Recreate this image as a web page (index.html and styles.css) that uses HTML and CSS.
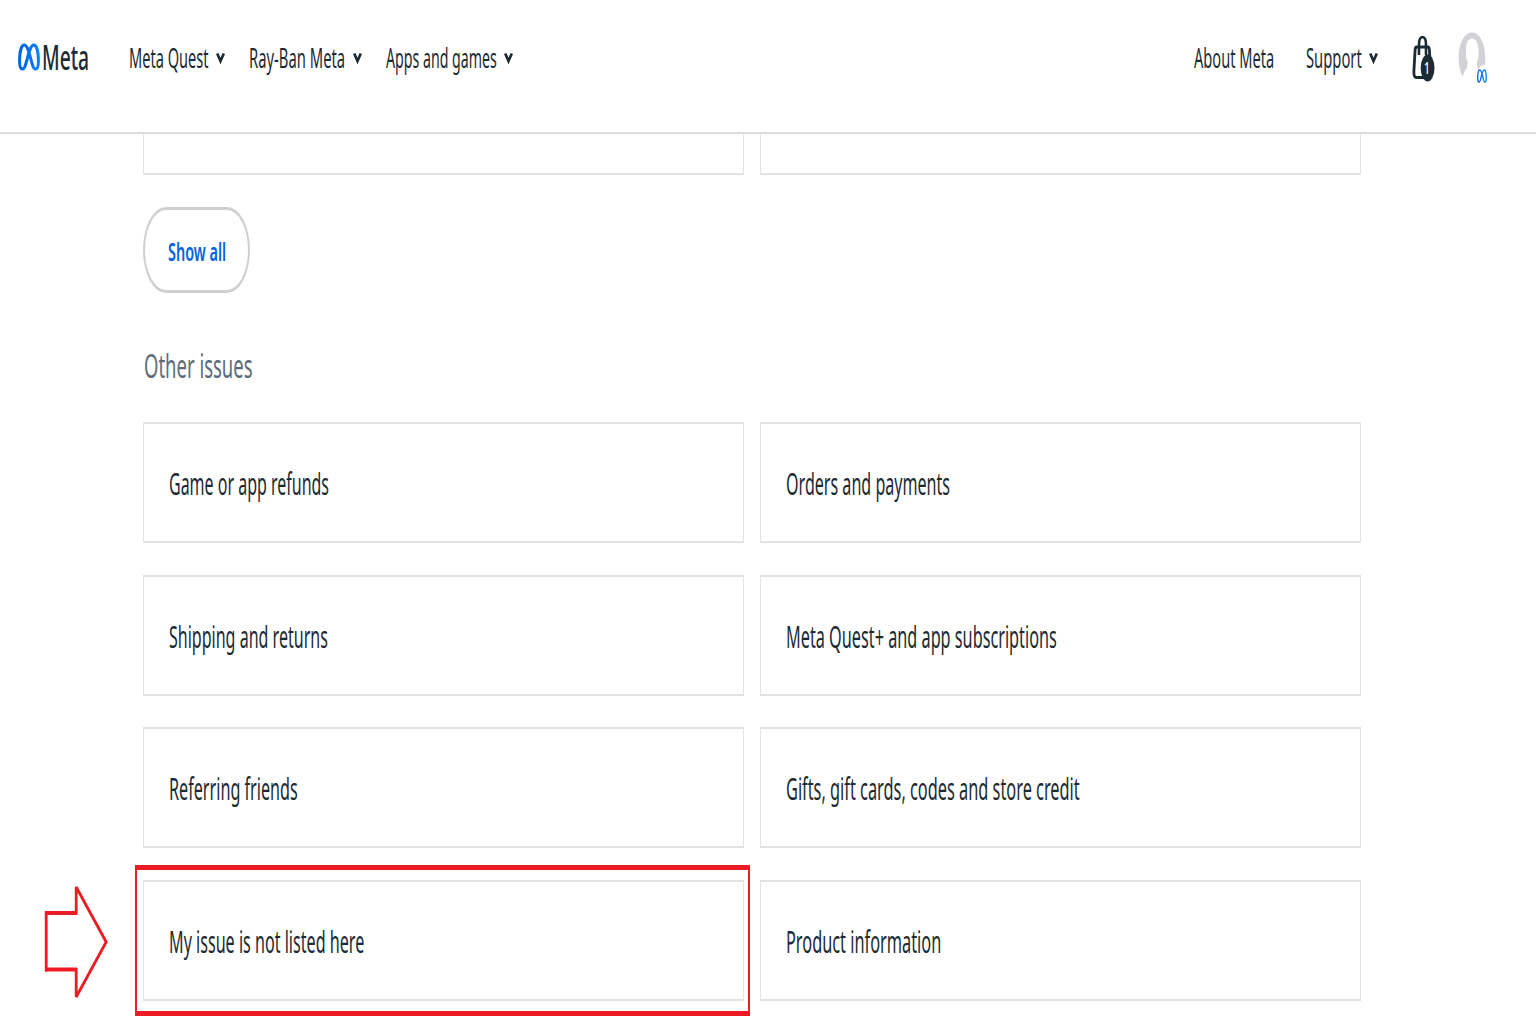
FILE: index.html
```html
<!DOCTYPE html>
<html lang="en">
<head>
<meta charset="utf-8">
<title>Meta support</title>
<link rel="stylesheet" href="styles.css">
</head>
<body>
<svg class="defs" aria-hidden="true">
  <linearGradient id="blue" x1="0" x2="1" y1="0" y2="0">
    <stop offset="0" stop-color="#0064e0"/>
    <stop offset="1" stop-color="#0a80fa"/>
  </linearGradient>
  <symbol id="meta-mark" viewBox="0 0 22 28" preserveAspectRatio="none">
    <path d="M1.600 18.500C1.600 9 3.200 1.900 6.200 1.900C9 1.900 10.700 8 12.300 14C14.200 21.500 15.300 26.100 17.500 26.100C19.800 26.100 20.400 23 20.400 18.500C20.400 9 18.800 1.900 15.800 1.900C13 1.900 11.300 8 9.700 14C7.800 21.500 6.700 26.100 4.500 26.100C2.200 26.100 1.600 23 1.600 18.500Z" fill="none" stroke="url(#blue)" stroke-width="3"/>
  </symbol>
  <symbol id="chevron" viewBox="0 0 9 12" preserveAspectRatio="none">
    <path d="M1.200 1.500 4.500 9 7.800 1.500" fill="none" stroke="#1c2b33" stroke-width="2.700"/>
  </symbol>
</svg>

<header class="header">
  <a class="logo">
    <svg class="logo-mark"><use href="#meta-mark"/></svg>
    <span class="logo-text"><span class="label s-logo">Meta</span></span>
  </a>
  <nav class="nav">
    <a class="nav-item w-quest"><span class="label s-quest">Meta Quest</span><svg class="chevron"><use href="#chevron"/></svg></a>
    <a class="nav-item w-rayban"><span class="label s-rayban">Ray-Ban Meta</span><svg class="chevron"><use href="#chevron"/></svg></a>
    <a class="nav-item w-apps"><span class="label s-apps">Apps and games</span><svg class="chevron"><use href="#chevron"/></svg></a>
  </nav>
  <div class="tools">
    <a class="nav-item w-about"><span class="label s-about">About Meta</span></a>
    <a class="nav-item w-support"><span class="label s-support">Support</span><svg class="chevron"><use href="#chevron"/></svg></a>
    <a class="bag">
      <svg width="24" height="48" viewBox="0 0 24 48">
        <path d="M4.700 13h11q1.500 0 1.700 3l1.200 21q.2 6.500-2 6.500H4q-2.300 0-2.100-6.500l1.200-21q.2-3 1.600-3Z" fill="none" stroke="#1c2b33" stroke-width="2.800"/>
        <path d="M7 21V11C7 6 8.200 3 10.500 3S14 6 14 11v10" fill="none" stroke="#1c2b33" stroke-width="2.600"/>
        <ellipse cx="15.600" cy="34" rx="6.900" ry="13.400" fill="#1c2b33"/>
      </svg>
      <span class="bag-count"><span class="label s-count">1</span></span>
    </a>
    <a class="avatar">
      <svg width="30" height="54" viewBox="0 0 30 54">
        <path d="M4.500 46C2 41 .7 34 .7 27 .7 12 6.500 1.500 14 1.500S27.200 12 27.200 27v6.500c-3-.5-5.500 1.500-7.200 6-.5-3-1.200-5-1-8.500 1.500-2.500 1.600-7 1.600-10.500 0-8-2.600-13-6.700-13S7.900 12.500 7.900 20.500c0 3.500.3 8 1.800 10.500.2 8-3.200 7-5.200 15Z" fill="#d0d2d5"/>
      </svg>
      <svg class="avatar-mark"><use href="#meta-mark"/></svg>
    </a>
  </div>
</header>

<main class="main">
  <div class="grid grid-cut">
    <div class="card"></div>
    <div class="card"></div>
  </div>
  <button class="show-all"><span class="label s-show">Show all</span></button>
  <h2 class="title"><span class="label s-title">Other issues</span></h2>
  <div class="grid">
    <a class="card"><span class="label s-game">Game or app refunds</span></a>
    <a class="card"><span class="label s-orders">Orders and payments</span></a>
    <a class="card"><span class="label s-shipping">Shipping and returns</span></a>
    <a class="card"><span class="label s-subs">Meta Quest+ and app subscriptions</span></a>
    <a class="card"><span class="label s-friends">Referring friends</span></a>
    <a class="card"><span class="label s-gifts">Gifts, gift cards, codes and store credit</span></a>
    <a class="card marked"><span class="label s-unlisted">My issue is not listed here</span>
      <svg class="arrow" viewBox="0 0 64 118"><path d="M1 28H33V32H1ZM1 84.500H33V88.500H1Z" fill="#ed1c24"/><path d="M2.200 28V88.500M32.200 32V4L62.200 59 32.200 114V85" fill="none" stroke="#ed1c24" stroke-width="2.800"/></svg>
    </a>
    <a class="card"><span class="label s-product">Product information</span></a>
  </div>
</main>
</body>
</html>
```
FILE: styles.css
```css
* { box-sizing: border-box; }
body {
  margin: 0;
  height: 1024px;
  overflow: hidden;
  background: #fff;
  color: #1c2b33;
  font-family: "Noto Sans", sans-serif;
}
.defs { position: absolute; width: 0; height: 0; }

/* Condensed lettering: each label is narrowed from its left edge */
.label {
  display: inline-block;
  white-space: nowrap;
  transform: scaleX(var(--sx));
  transform-origin: 0 50%;
}
.s-logo { --sx: .565; }
.s-quest { --sx: .54; }
.s-rayban { --sx: .548; }
.s-apps { --sx: .525; }
.s-about { --sx: .541; }
.s-support { --sx: .547; }
.s-count { --sx: .6; }
.s-show { --sx: .555; }
.s-title { --sx: .56; }
.s-game { --sx: .533; }
.s-orders { --sx: .536; }
.s-shipping { --sx: .5345; }
.s-subs { --sx: .5415; }
.s-friends { --sx: .539; }
.s-gifts { --sx: .5445; }
.s-unlisted { --sx: .5375; }
.s-product { --sx: .544; }

.header {
  display: flex;
  align-items: center;
  height: 134px;
  padding: 0 48px 16px 18px;
  border-bottom: 2px solid #dadde1;
}
.logo { display: flex; align-items: center; width: 110.500px; gap: 2px; padding-bottom: 2px; }
.logo-mark { width: 22px; height: 28px; }
.logo-text { width: 48px; font-size: 34px; line-height: 40px; font-weight: 500; }
.nav { display: flex; gap: 24px; }
.nav-item {
  display: flex;
  align-items: center;
  justify-content: space-between;
  font-size: 27px;
  line-height: 40px;
}
.nav-item .label { width: 0; }
.chevron { width: 9px; height: 12px; }
.w-quest { width: 96px; }
.w-rayban { width: 113px; }
.w-apps { width: 127px; }
.tools { display: flex; align-items: center; margin-left: auto; }
.w-about { width: 112px; }
.w-support { width: 72px; }
.bag { position: relative; width: 24px; height: 48px; margin-left: 34px; }
.bag-count {
  position: absolute;
  left: 12px;
  top: 24px;
  width: 8px;
  color: #fff;
  font-size: 17px;
  font-weight: 500;
  line-height: 20px;
}
.avatar { position: relative; width: 30px; height: 54px; margin-left: 22px; }
.avatar-mark { position: absolute; left: 19px; top: 38px; width: 10px; height: 14px; }

.main { padding: 0 175px 0 143px; }
.grid {
  display: grid;
  grid-template-columns: 601px 601px;
  column-gap: 16px;
  row-gap: 31.700px;
}
.card {
  position: relative;
  display: flex;
  align-items: center;
  height: 121px;
  padding: 3px 0 0 25px;
  border: 1px solid #e1e4e7;
  border-top-width: 2px;
  border-bottom-width: 2px;
  font-size: 30px;
  line-height: 40px;
}
.grid-cut .card { height: 41px; border-top: 0; }
.show-all {
  display: block;
  width: 107px;
  height: 86px;
  margin: 32px 0 0;
  padding: 1px 0 0 22.500px;
  border: solid #ced0d4;
  border-width: 3px 2px;
  border-radius: 23px / 43px;
  background: #fff;
  color: #0064e0;
  font: 600 26px/40px "Noto Sans", sans-serif;
  text-align: left;
}
.title {
  margin: 50px 0 34px;
  padding-left: 1px;
  font-size: 33px;
  line-height: 45px;
  font-weight: 400;
  color: #5d6c7b;
}
.marked::after {
  content: "";
  position: absolute;
  inset: -17px -7px -17px -9px;
  border: solid #ed1c24;
  border-width: 5px 2.500px;
}
.arrow { position: absolute; left: -100px; top: 1px; width: 64px; height: 118px; }
```
